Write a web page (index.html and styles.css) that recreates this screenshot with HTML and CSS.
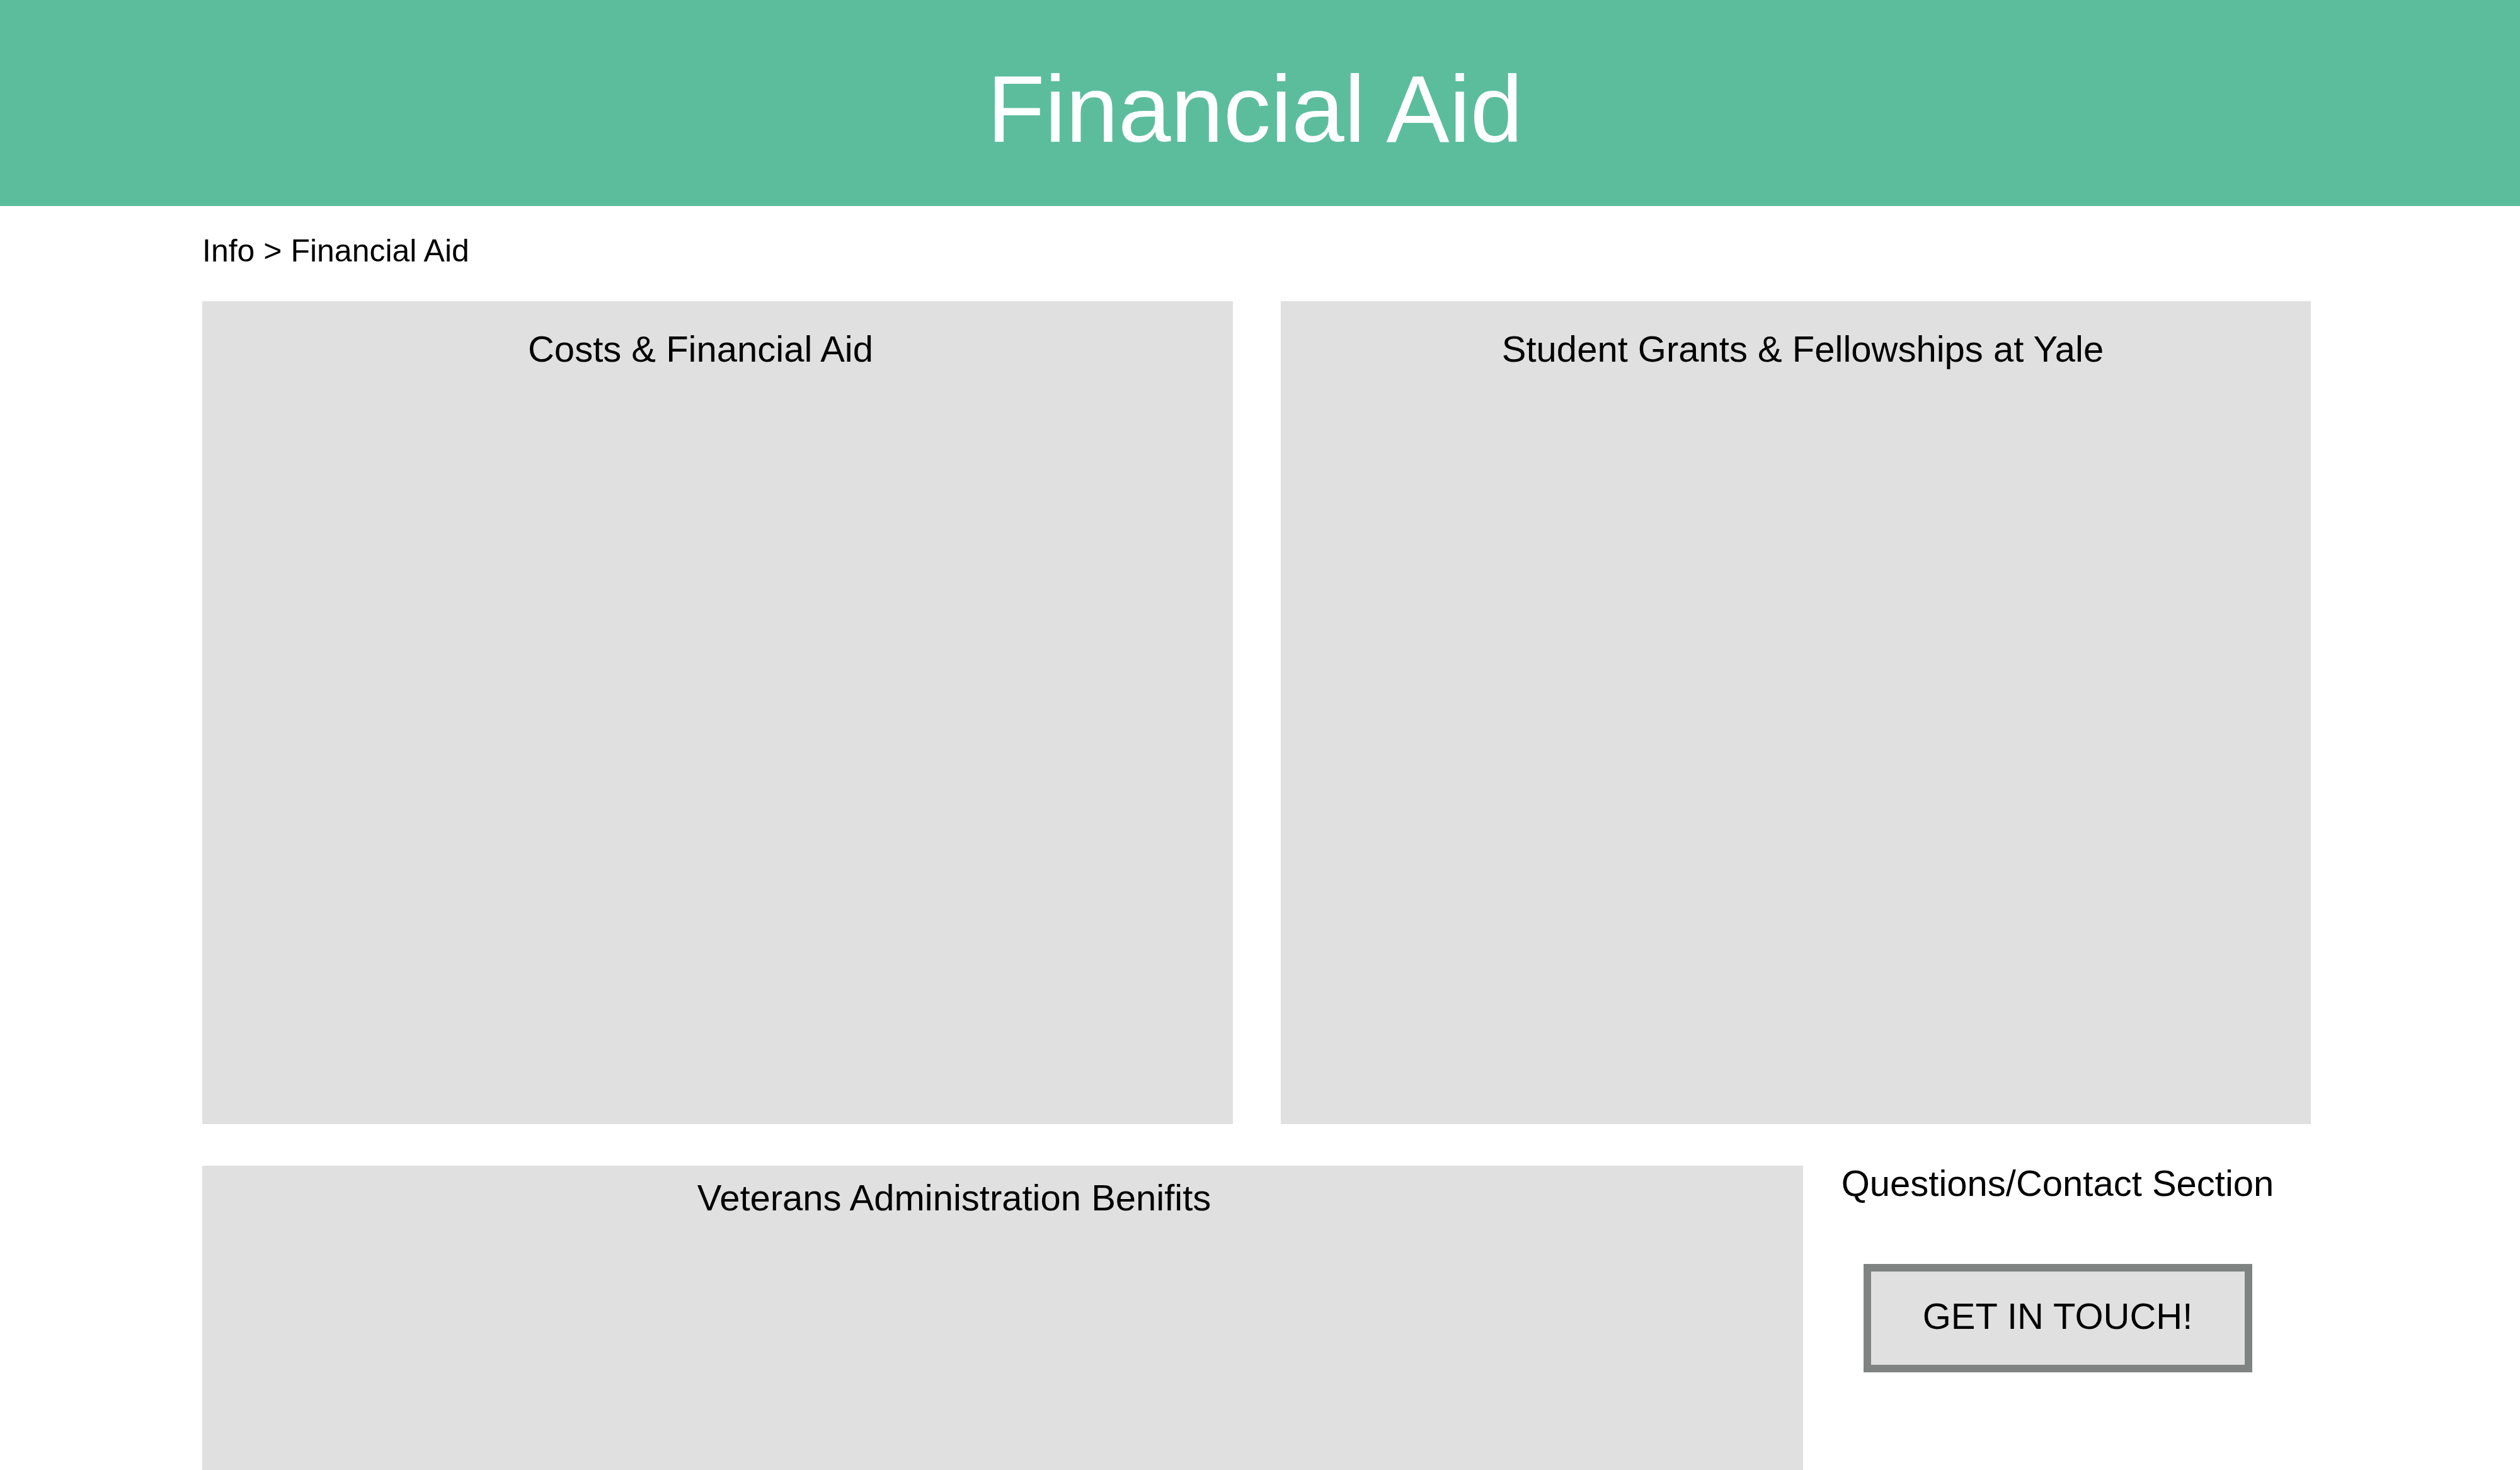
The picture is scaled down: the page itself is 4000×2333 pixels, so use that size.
FILE: index.html
```
<!DOCTYPE html>
<html lang="en">
<head>
<meta charset="utf-8">
<title>Financial Aid</title>
<link rel="stylesheet" href="styles.css">
</head>
<body>
<header class="site-header">
  <h1 class="site-title">Financial Aid</h1>
</header>
<main class="content">
  <nav class="breadcrumb">Info &gt; Financial Aid</nav>
  <section class="row-top">
    <div class="panel panel-costs"><h2 class="panel-title">Costs &amp; Financial Aid</h2></div>
    <div class="panel panel-grants"><h2 class="panel-title">Student Grants &amp; Fellowships at Yale</h2></div>
  </section>
  <section class="row-bottom">
    <div class="panel panel-veterans"><h2 class="panel-title">Veterans Administration Benifits</h2></div>
    <aside class="contact">
      <h2 class="contact-title">Questions/Contact Section</h2>
      <button class="contact-button" type="button">GET IN TOUCH!</button>
    </aside>
  </section>
</main>
</body>
</html>
```
FILE: styles.css
```
html, body {
  margin: 0;
  padding: 0;
  background: #ffffff;
}
body {
  font-family: "Liberation Sans", Arial, sans-serif;
  color: #000000;
}
.site-header {
  background: #5cbd9d;
  height: 327px;
  box-sizing: border-box;
  padding-top: 87px;
  text-align: center;
}
.site-title {
  margin: 0;
  padding-right: 16px;
  font-size: 150px;
  font-weight: normal;
  line-height: 172px;
  color: #ffffff;
}
.content {
  margin-left: 321px;
  width: 3347px;
}
.breadcrumb {
  font-size: 50px;
  line-height: 58px;
  padding-top: 42px;
  margin-bottom: 51px;
}
.row-top {
  display: grid;
  grid-template-columns: 1636px 1635px;
  column-gap: 76px;
}
.panel {
  background: #e0e0e0;
  box-sizing: border-box;
}
.panel-title {
  margin: 0;
  font-size: 58px;
  font-weight: normal;
  line-height: 66px;
  text-align: center;
}
.row-top .panel {
  height: 1306px;
  padding-top: 43px;
}
.panel-costs .panel-title {
  padding-right: 54px;
}
.panel-grants .panel-title {
  padding-left: 22px;
}
.row-bottom {
  display: grid;
  grid-template-columns: 2541px 806px;
  margin-top: 61px;
  align-items: start;
}
.panel-veterans {
  margin-top: 5px;
  height: 600px;
  padding-top: 18px;
}
.panel-veterans .panel-title {
  padding-right: 154px;
}
.contact {
  text-align: center;
  padding-left: 2px;
}
.contact-title {
  margin: 0;
  font-size: 58px;
  font-weight: normal;
  line-height: 66px;
}
.contact-button {
  margin-top: 95px;
  font-family: "Liberation Sans", Arial, sans-serif;
  font-size: 58px;
  line-height: 66px;
  color: #000000;
  background: #e0e0e0;
  border: 12px solid #7f8483;
  border-radius: 0;
  padding: 38px 80px 44px;
  width: 617px;
  height: 172px;
  box-sizing: border-box;
  cursor: pointer;
}
```
